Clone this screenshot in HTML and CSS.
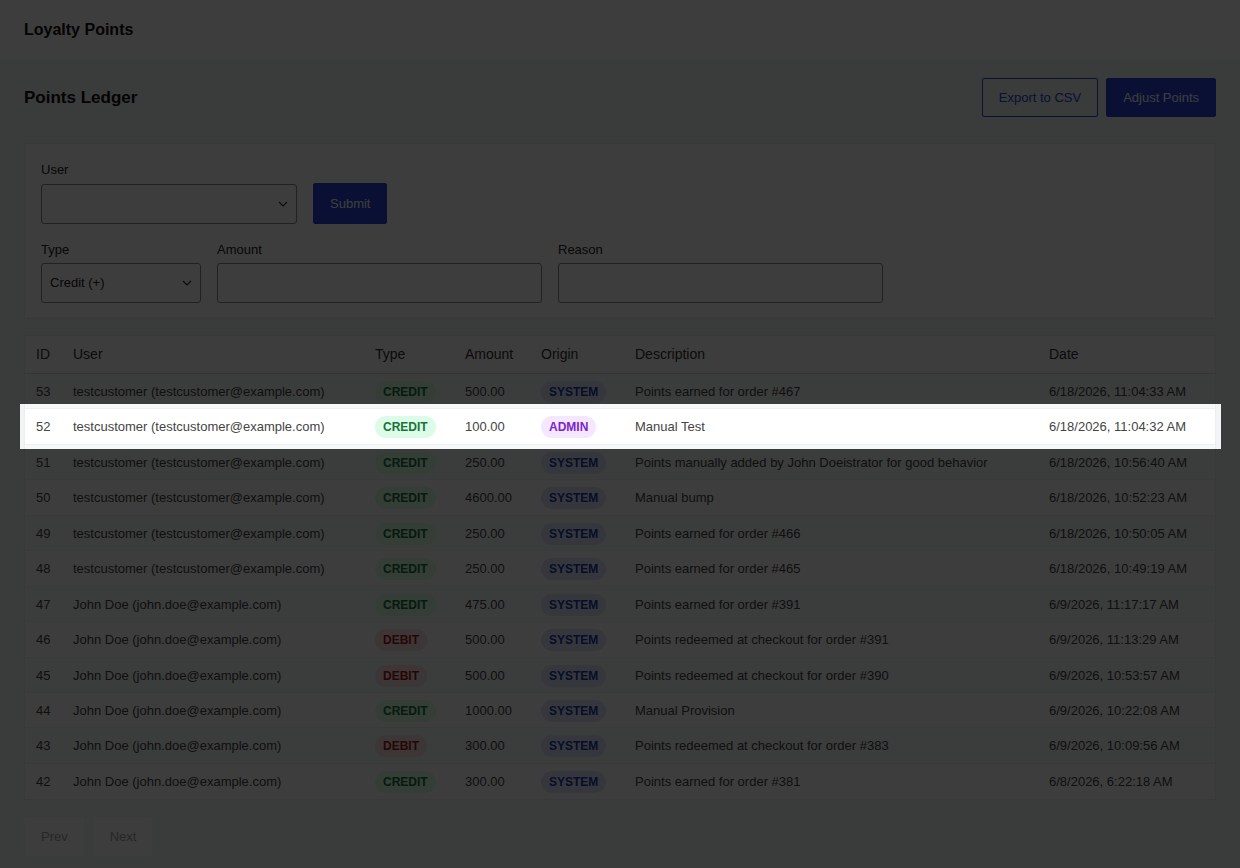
FILE: index.html
```html
<!DOCTYPE html>
<html lang="en">
<head>
<meta charset="utf-8">
<title>Loyalty Points</title>
<link rel="stylesheet" href="styles.css">
</head>
<body>
<header class="topbar">
  <h1 class="topbar-title">Loyalty Points</h1>
</header>
<main class="main">
  <div class="toolbar">
    <h2 class="page-title">Points Ledger</h2>
    <div class="toolbar-actions">
      <button class="btn btn-outline">Export to CSV</button>
      <button class="btn btn-primary">Adjust Points</button>
    </div>
  </div>

  <section class="card">
    <div class="form-row">
      <div class="field">
        <label class="field-label">User</label>
        <div class="select-wrap select-user">
          <select class="control select"><option></option></select>
          <svg class="chevron" viewBox="0 0 10 6" width="10" height="6"><path d="M1 1 L5 5 L9 1" fill="none" stroke="#333" stroke-width="1.2"/></svg>
        </div>
      </div>
      <button class="btn btn-primary btn-submit">Submit</button>
    </div>
    <div class="form-row form-row-2">
      <div class="field">
        <label class="field-label">Type</label>
        <div class="select-wrap select-type">
          <select class="control select"><option>Credit (+)</option></select>
          <svg class="chevron" viewBox="0 0 10 6" width="10" height="6"><path d="M1 1 L5 5 L9 1" fill="none" stroke="#333" stroke-width="1.2"/></svg>
        </div>
      </div>
      <div class="field">
        <label class="field-label">Amount</label>
        <input class="control input-wide" type="text">
      </div>
      <div class="field">
        <label class="field-label">Reason</label>
        <input class="control input-wide" type="text">
      </div>
    </div>
  </section>

  <section class="table-wrap">
    <table class="ledger">
      <colgroup>
        <col class="c-id"><col class="c-user"><col class="c-type"><col class="c-amount"><col class="c-origin"><col class="c-desc"><col class="c-date">
      </colgroup>
      <thead>
        <tr><th>ID</th><th>User</th><th>Type</th><th>Amount</th><th>Origin</th><th>Description</th><th>Date</th></tr>
      </thead>
      <tbody>
        <tr><td>53</td><td>testcustomer (testcustomer@example.com)</td><td><span class="badge credit">CREDIT</span></td><td>500.00</td><td><span class="badge system">SYSTEM</span></td><td>Points earned for order #467</td><td>6/18/2026, 11:04:33 AM</td></tr>
        <tr><td>52</td><td>testcustomer (testcustomer@example.com)</td><td><span class="badge credit">CREDIT</span></td><td>100.00</td><td><span class="badge admin">ADMIN</span></td><td>Manual Test</td><td>6/18/2026, 11:04:32 AM</td></tr>
        <tr><td>51</td><td>testcustomer (testcustomer@example.com)</td><td><span class="badge credit">CREDIT</span></td><td>250.00</td><td><span class="badge system">SYSTEM</span></td><td>Points manually added by John Doeistrator for good behavior</td><td>6/18/2026, 10:56:40 AM</td></tr>
        <tr><td>50</td><td>testcustomer (testcustomer@example.com)</td><td><span class="badge credit">CREDIT</span></td><td>4600.00</td><td><span class="badge system">SYSTEM</span></td><td>Manual bump</td><td>6/18/2026, 10:52:23 AM</td></tr>
        <tr><td>49</td><td>testcustomer (testcustomer@example.com)</td><td><span class="badge credit">CREDIT</span></td><td>250.00</td><td><span class="badge system">SYSTEM</span></td><td>Points earned for order #466</td><td>6/18/2026, 10:50:05 AM</td></tr>
        <tr><td>48</td><td>testcustomer (testcustomer@example.com)</td><td><span class="badge credit">CREDIT</span></td><td>250.00</td><td><span class="badge system">SYSTEM</span></td><td>Points earned for order #465</td><td>6/18/2026, 10:49:19 AM</td></tr>
        <tr><td>47</td><td>John Doe (john.doe@example.com)</td><td><span class="badge credit">CREDIT</span></td><td>475.00</td><td><span class="badge system">SYSTEM</span></td><td>Points earned for order #391</td><td>6/9/2026, 11:17:17 AM</td></tr>
        <tr><td>46</td><td>John Doe (john.doe@example.com)</td><td><span class="badge debit">DEBIT</span></td><td>500.00</td><td><span class="badge system">SYSTEM</span></td><td>Points redeemed at checkout for order #391</td><td>6/9/2026, 11:13:29 AM</td></tr>
        <tr><td>45</td><td>John Doe (john.doe@example.com)</td><td><span class="badge debit">DEBIT</span></td><td>500.00</td><td><span class="badge system">SYSTEM</span></td><td>Points redeemed at checkout for order #390</td><td>6/9/2026, 10:53:57 AM</td></tr>
        <tr><td>44</td><td>John Doe (john.doe@example.com)</td><td><span class="badge credit">CREDIT</span></td><td>1000.00</td><td><span class="badge system">SYSTEM</span></td><td>Manual Provision</td><td>6/9/2026, 10:22:08 AM</td></tr>
        <tr><td>43</td><td>John Doe (john.doe@example.com)</td><td><span class="badge debit">DEBIT</span></td><td>300.00</td><td><span class="badge system">SYSTEM</span></td><td>Points redeemed at checkout for order #383</td><td>6/9/2026, 10:09:56 AM</td></tr>
        <tr><td>42</td><td>John Doe (john.doe@example.com)</td><td><span class="badge credit">CREDIT</span></td><td>300.00</td><td><span class="badge system">SYSTEM</span></td><td>Points earned for order #381</td><td>6/8/2026, 6:22:18 AM</td></tr>
      </tbody>
    </table>
  </section>

  <nav class="pager">
    <button class="btn btn-page" disabled>Prev</button>
    <button class="btn btn-page" disabled>Next</button>
  </nav>
</main>

<div class="tour-cutout" aria-hidden="true"></div>
</body>
</html>
```

FILE: styles.css
```css
* { box-sizing: border-box; }

html, body {
  margin: 0;
  padding: 0;
}

body {
  font-family: "Liberation Sans", Arial, sans-serif;
  background: #f3f4f6;
  color: #222;
  font-size: 13px;
  overflow: hidden;
}

.topbar {
  height: 60px;
  background: #ffffff;
  display: flex;
  align-items: center;
  padding: 0 24px 1px;
}

.topbar-title {
  margin: 0;
  font-size: 16px;
  font-weight: 700;
  color: #111;
}

.main {
  padding: 18px 24px 8px;
}

.toolbar {
  display: flex;
  align-items: center;
  justify-content: space-between;
  height: 39px;
  margin-bottom: 26px;
}

.page-title {
  margin: 0;
  font-size: 17px;
  font-weight: 700;
  color: #111;
}

.toolbar-actions {
  display: flex;
  gap: 8px;
}

.btn {
  font-family: inherit;
  font-size: 13px;
  line-height: 15px;
  padding: 11px 16px;
  border: 1px solid transparent;
  border-radius: 2px;
  cursor: pointer;
}

.btn-outline {
  background: transparent;
  color: #2746d6;
  border-color: #2746d6;
}

.btn-primary {
  background: #2746d6;
  border-color: #2746d6;
  color: #ffffff;
}

.btn-submit {
  padding: 12px 16px;
  align-self: flex-end;
}

.card {
  background: #ffffff;
  border: 1px solid #eceef1;
  padding: 16px 16px 15px;
  display: flex;
  flex-direction: column;
  gap: 15px;
}

.form-row {
  display: flex;
  align-items: flex-end;
  gap: 16px;
}

.field {
  display: flex;
  flex-direction: column;
}

.field-label {
  font-size: 13px;
  line-height: 20px;
  margin-bottom: 4px;
  color: #222;
}

.form-row-2 .field-label {
  line-height: 21px;
  margin-bottom: 3px;
}

.control {
  height: 40px;
  border: 1px solid #8a8a8a;
  border-radius: 3px;
  background: #ffffff;
  font-family: inherit;
  font-size: 13px;
  color: #222;
  padding: 0 8px 1px;
}

.select-wrap {
  position: relative;
}

.select {
  appearance: none;
  -webkit-appearance: none;
  width: 100%;
}

.select-user { width: 256px; }
.select-type { width: 160px; }

.chevron {
  position: absolute;
  right: 9px;
  top: 17px;
  pointer-events: none;
}

.input-wide { width: 325px; }

.table-wrap {
  margin-top: 16px;
  background: #ffffff;
  border: 1px solid #eceef1;
}

.ledger {
  width: 100%;
  border-collapse: collapse;
  table-layout: fixed;
}

.c-id { width: 37px; }
.c-user { width: 302px; }
.c-type { width: 90px; }
.c-amount { width: 76px; }
.c-origin { width: 94px; }
.c-desc { width: 414px; }
.c-date { width: 177px; }

.ledger th {
  text-align: left;
  font-weight: 400;
  font-size: 14px;
  line-height: 16px;
  color: #333;
  padding: 10px 4px 11px 11px;
  border-bottom: 1px solid #d9dbe0;
  white-space: nowrap;
}

.ledger td {
  font-size: 13px;
  line-height: 22px;
  height: 35.45px;
  color: #444;
  padding: 7px 4px 5.45px 11px;
  border-bottom: 1px solid #eef0f2;
  white-space: nowrap;
  overflow: hidden;
  vertical-align: middle;
}

.ledger tbody tr:nth-child(odd) td {
  background: #f7f8f9;
}

.ledger tbody tr:last-child td {
  border-bottom: none;
}

.badge {
  display: inline-block;
  font-size: 12px;
  font-weight: 700;
  line-height: 14px;
  padding: 4px 8px;
  border-radius: 11px;
  vertical-align: top;
}

.badge.credit { background: #dcfce7; color: #17733a; }
.badge.debit { background: #fee2e2; color: #a11b1b; }
.badge.system { background: #dde7fb; color: #1e3aa8; }
.badge.admin { background: #f3e8ff; color: #7e22ce; }

.pager {
  margin-top: 17px;
  display: flex;
  gap: 10px;
  padding-left: 1px;
}

.btn-page {
  background: #ffffff;
  color: #9ea2a9;
  border-color: #ffffff;
  padding: 11px 15px;
  cursor: default;
}

.tour-cutout {
  position: absolute;
  left: 20px;
  top: 404px;
  width: 1201px;
  height: 45px;
  box-shadow: 0 0 0 3000px rgba(0, 0, 0, 0.76);
  pointer-events: none;
  z-index: 10;
}
```
